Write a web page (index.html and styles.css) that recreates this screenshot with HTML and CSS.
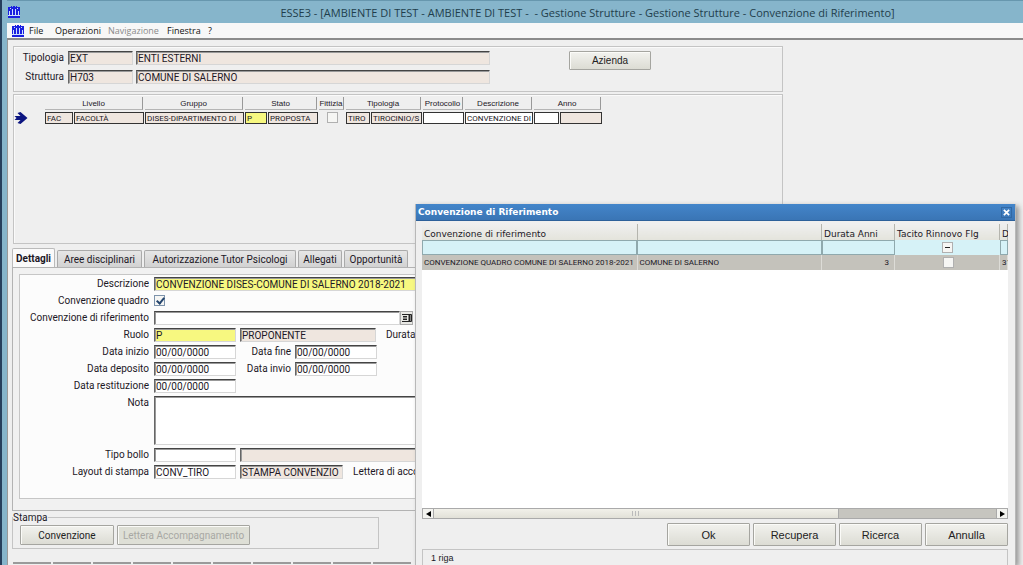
FILE: index.html
```html
<!DOCTYPE html>
<html lang="it">
<head>
<meta charset="utf-8">
<title>ESSE3 - Convenzione di Riferimento</title>
<link rel="stylesheet" href="styles.css">
</head>
<body>
<svg class="defs" aria-hidden="true">
  <symbol id="logo" viewBox="0 0 12 12">
    <path fill="#1a1fe0" d="M0 1h3V0h1v1h1V0h2v1h1V0h1v1h3v11H0z"/>
    <path fill="#cfe0fb" d="M1 5h1v4H1zM4 3h1v6H4zM7 3h1v6H7zM10 5h1v4h-1zM2 2h1v1H2zM9 2h1v1H9zM0 9h12v1H0z"/>
  </symbol>
</svg>
<div class="window">
  <header class="titlebar">
    <svg class="logo"><use href="#logo"/></svg>
    <h1 class="title">ESSE3 - [AMBIENTE DI TEST - AMBIENTE DI TEST -&nbsp; - Gestione Strutture - Gestione Strutture - Convenzione di Riferimento]</h1>
  </header>
  <nav class="menubar">
    <svg class="logo"><use href="#logo"/></svg>
    <button class="menu">File</button>
    <button class="menu menu-wide">Operazioni</button>
    <button class="menu menu-wide" disabled>Navigazione</button>
    <button class="menu menu-mid">Finestra</button>
    <button class="menu">?</button>
  </nav>
  <main class="content">
    <section class="panel head-panel">
      <div class="head-fields">
        <label class="label" for="tipologia">Tipologia</label>
        <input class="field ro" id="tipologia" value="EXT" readonly>
        <input class="field ro" aria-label="Descrizione tipologia" value="ENTI ESTERNI" readonly>
        <label class="label" for="struttura">Struttura</label>
        <input class="field ro" id="struttura" value="H703" readonly>
        <input class="field ro" aria-label="Descrizione struttura" value="COMUNE DI SALERNO" readonly>
      </div>
      <button class="btn btn-azienda">Azienda</button>
    </section>

    <section class="panel list-panel">
      <table class="list">
        <colgroup><col class="c31"><col class="c29"><col class="c71"><col class="c100"><col class="c23"><col class="c51"><col class="c27"><col class="c25"><col class="c52"><col class="c42"><col class="c69"><col class="c26"><col class="c43"></colgroup>
        <thead>
          <tr>
            <td></td>
            <th colspan="2"><span>Livello</span></th>
            <th><span>Gruppo</span></th>
            <th colspan="2"><span>Stato</span></th>
            <th><span>Fittizia</span></th>
            <th colspan="2"><span>Tipologia</span></th>
            <th><span>Protocollo</span></th>
            <th><span>Descrizione</span></th>
            <th colspan="2"><span>Anno</span></th>
          </tr>
        </thead>
        <tbody>
          <tr>
            <td><svg class="arrow" viewBox="0 0 13 12"><path fill="#0b1480" d="M0 4h6L3 1l3-1 7 6-7 6-3-1 3-3H0l2-2z"/></svg></td>
            <td><span class="cell tan">FAC</span></td>
            <td><span class="cell tan">FACOLTÀ</span></td>
            <td><span class="cell tan">DISES-DIPARTIMENTO DI</span></td>
            <td><span class="cell yellow">P</span></td>
            <td><span class="cell tan">PROPOSTA</span></td>
            <td class="center"><input class="check" type="checkbox" aria-label="Fittizia"></td>
            <td><span class="cell tan">TIRO</span></td>
            <td><span class="cell tan">TIROCINIO/S</span></td>
            <td><span class="cell"></span></td>
            <td><span class="cell">CONVENZIONE DI</span></td>
            <td><span class="cell"></span></td>
            <td><span class="cell tan"></span></td>
          </tr>
        </tbody>
      </table>
    </section>

    <div class="tabs" role="tablist">
      <button class="tab active" role="tab">Dettagli</button>
      <button class="tab w85" role="tab">Aree disciplinari</button>
      <button class="tab w152" role="tab">Autorizzazione Tutor Psicologi</button>
      <button class="tab w44" role="tab">Allegati</button>
      <button class="tab w64" role="tab">Opportunità</button>
    </div>
    <section class="tab-panel">
      <form class="form">
        <label class="label" for="descr">Descrizione</label>
        <div class="row"><input class="field req grow" id="descr" value="CONVENZIONE DISES-COMUNE DI SALERNO 2018-2021"></div>
        <label class="label" for="quadro">Convenzione quadro</label>
        <div class="row"><input class="check" type="checkbox" id="quadro" checked></div>
        <label class="label" for="rif">Convenzione di riferimento</label>
        <div class="row tight"><input class="field w246" id="rif"><button type="button" class="lookup" aria-label="Cerca"><svg viewBox="0 0 10 10"><path fill="none" stroke="#222" d="M0 1.500h9.500v7H0M1 3.500h4M1 5h4M1 6.500h4"/><path stroke="#222" stroke-width="2" d="M7.500 2v6"/></svg></button></div>
        <label class="label" for="ruolo">Ruolo</label>
        <div class="row"><input class="field req w82" id="ruolo" value="P"><input class="field ro w136" aria-label="Descrizione ruolo" value="PROPONENTE" readonly><span class="label after">Durata</span></div>
        <label class="label" for="inizio">Data inizio</label>
        <div class="row"><input class="field w82" id="inizio" value="00/00/0000"><label class="label w51" for="fine">Data fine</label><input class="field w82" id="fine" value="00/00/0000"></div>
        <label class="label" for="deposito">Data deposito</label>
        <div class="row"><input class="field w82" id="deposito" value="00/00/0000"><label class="label w51" for="invio">Data invio</label><input class="field w82" id="invio" value="00/00/0000"></div>
        <label class="label" for="restituzione">Data restituzione</label>
        <div class="row"><input class="field w82" id="restituzione" value="00/00/0000"></div>
        <label class="label" for="nota">Nota</label>
        <div class="row"><textarea class="field note grow" id="nota"></textarea></div>
        <label class="label" for="bollo">Tipo bollo</label>
        <div class="row"><input class="field w82" id="bollo"><input class="field ro grow" aria-label="Descrizione bollo" readonly></div>
        <label class="label" for="layout">Layout di stampa</label>
        <div class="row"><input class="field w82" id="layout" value="CONV_TIRO"><input class="field ro w103" aria-label="Descrizione layout" value="STAMPA CONVENZIO" readonly><span class="label after">Lettera di acco</span></div>
      </form>
    </section>

    <fieldset class="print">
      <legend>Stampa</legend>
      <button class="btn w94">Convenzione</button>
      <button class="btn w133" disabled>Lettera Accompagnamento</button>
    </fieldset>
    <div class="strip"><i></i><i></i><i></i><i></i><i></i><i></i><i></i><i></i><i></i><i></i></div>
  </main>
</div>

<div class="dialog" role="dialog" aria-labelledby="dlg-title">
  <header class="dlg-head">
    <h2 id="dlg-title">Convenzione di Riferimento</h2>
    <button class="close" aria-label="Chiudi"><svg viewBox="0 0 8 8"><path stroke="#fff" stroke-width="2" d="M1 1l6 6M7 1L1 7"/></svg></button>
  </header>
  <div class="dlg-body">
    <div class="result">
      <table class="grid">
        <colgroup><col class="c215"><col><col class="c73"><col class="c105"><col class="c8"></colgroup>
        <thead><tr><th>Convenzione di riferimento</th><th></th><th>Durata Anni</th><th>Tacito Rinnovo Flg</th><th>D</th></tr></thead>
        <tbody>
          <tr class="filter">
            <td><input class="filter-box" aria-label="Filtro convenzione"></td>
            <td><input class="filter-box" aria-label="Filtro struttura"></td>
            <td><input class="filter-box" aria-label="Filtro durata"></td>
            <td class="center"><input class="check mixed" type="checkbox" aria-label="Filtro tacito rinnovo"></td>
            <td><input class="filter-box" aria-label="Filtro data"></td>
          </tr>
          <tr class="selected">
            <td>CONVENZIONE QUADRO COMUNE DI SALERNO 2018-2021</td>
            <td>COMUNE DI SALERNO</td>
            <td class="num">3</td>
            <td class="center"><input class="check" type="checkbox" aria-label="Tacito rinnovo"></td>
            <td>31</td>
          </tr>
        </tbody>
      </table>
    </div>
    <div class="scroll">
      <button class="scroll-btn" aria-label="Sinistra"><svg viewBox="0 0 5 6"><path d="M5 0v6L0 3z"/></svg></button>
      <div class="track"><div class="thumb"><i></i><i></i><i></i></div></div>
      <button class="scroll-btn" aria-label="Destra"><svg viewBox="0 0 5 6"><path d="M0 0v6l5-3z"/></svg></button>
    </div>
    <div class="actions">
      <button class="btn">Ok</button>
      <button class="btn">Recupera</button>
      <button class="btn">Ricerca</button>
      <button class="btn">Annulla</button>
    </div>
    <div class="status">1 riga</div>
  </div>
</div>
</body>
</html>
```

FILE: styles.css
```css
* { box-sizing: border-box; }
body {
  margin: 0;
  height: 100vh;
  overflow: hidden;
  position: relative;
  background: #86b5cb;
  color: #1c1826;
  font-family: Roboto, "Liberation Sans", Arial, sans-serif;
  font-size: 10px;
}
button, input, textarea { font: inherit; color: inherit; margin: 0; border-radius: 0; }
.defs { display: none; }

.window {
  height: 100vh;
  display: flex;
  flex-direction: column;
  border-left: 2px solid #263f5c;
  padding-left: 5px;
  overflow: hidden;
}
.titlebar {
  flex: none;
  height: 23px;
  display: flex;
  align-items: center;
  border-top: 1px solid #6797ae;
  padding-left: 1px;
}
.logo { width: 12px; height: 12px; flex: none; }
.title {
  flex: 1;
  margin: 0;
  padding-left: 132px;
  text-align: center;
  font: 11px "Open Sans", "Noto Sans", sans-serif;
  color: #1f3e4c;
  white-space: nowrap;
}
.menubar {
  flex: none;
  height: 17px;
  display: flex;
  align-items: center;
  padding-left: 5px;
  background: #f7f7f7;
  border-bottom: 2px solid #8b8b8b;
  font: 9px "Open Sans", "Noto Sans", sans-serif;
}
.menu { border: 0; background: none; padding: 0 0 0 5px; text-align: left; color: #111; width: 26px; }
.menu-wide { width: 53px; }
.menu-wide[disabled] { width: 59px; color: #8a8a8a; }
.menu-mid { width: 41px; }

.content {
  flex: 1;
  min-height: 0;
  overflow: hidden;
  background: #efefef;
  border-left: 1px solid #999;
  padding: 6px 240px 0 5px;
}
.panel { border: 1px solid #c4c4c4; box-shadow: inset 1px 1px #fafafa; }
.head-panel { height: 46px; display: flex; align-items: flex-start; gap: 79px; padding: 4px 0 0 0; }
.head-fields { display: grid; grid-template-columns: 51px 65px 354px; gap: 5px 3px; }
.head-fields .label { margin-right: 1px; }
.list-panel { height: 150px; margin-top: 2px; padding-top: 2px; }

.label { line-height: 13px; text-align: right; white-space: nowrap; }
.field {
  display: block;
  width: 100%;
  min-width: 0;
  height: 14px;
  padding: 1px 1px 0;
  line-height: 12px;
  background: #fff;
  border: 1px solid #d6d6d6;
  border-top: 1px solid #444;
  border-left: 1px solid #666;
  box-shadow: inset 1px 1px #999;
}
.ro { background: #efe6df; }
.req { background: #f7f880; }

.btn {
  height: 20px;
  padding: 0;
  border: 1px solid #a5a5a0;
  border-radius: 1px;
  background: linear-gradient(#f2f2ee, #dcdcd4);
  box-shadow: inset 1px 1px #fbfbf8;
  color: #222;
  white-space: nowrap;
}
.btn[disabled] { color: #a8a8a4; background: #dedfd6; }
.btn-azienda { width: 82px; height: 19px; font-family: "Liberation Sans", Arial, sans-serif; }

.list { border-collapse: collapse; table-layout: fixed; width: 589px; font: 8px Roboto, Arial, sans-serif; }
.list td, .list th { padding: 0 2px 0 0; vertical-align: top; font-weight: 400; }
.list th span {
  display: block;
  height: 13px;
  line-height: 13px;
  font-family: "Liberation Sans", Arial, sans-serif;
  border-right: 1px solid #999;
  border-bottom: 1px solid #b5b5b5;
  white-space: nowrap;
}
.list tbody td { padding-top: 2px; padding-right: 1px; }
.cell {
  display: block;
  height: 12px;
  padding: 0 1px;
  line-height: 11px;
  border: 1px solid #333;
  background: #fff;
  white-space: nowrap;
}
.tan { background: #efe6df; }
.yellow { background: #f7f880; }
.arrow { display: block; width: 14px; height: 12px; }
.c8 { width: 8px; } .c23 { width: 23px; } .c25 { width: 25px; } .c26 { width: 26px; }
.c27 { width: 27px; } .c29 { width: 29px; } .c31 { width: 31px; } .c42 { width: 42px; }
.c43 { width: 43px; } .c51 { width: 51px; } .c52 { width: 52px; } .c69 { width: 69px; }
.c71 { width: 71px; } .c73 { width: 73px; } .c100 { width: 100px; } .c105 { width: 105px; }
.c215 { width: 215px; }

.check {
  appearance: none;
  display: inline-block;
  vertical-align: top;
  width: 11px;
  height: 11px;
  border: 1px solid #b0b0b0;
  background: #f6f6f4;
  position: relative;
}
.check:checked { border-color: #7d93ab; }
.check:checked::after {
  content: "";
  position: absolute;
  left: 3px;
  top: 0;
  width: 3px;
  height: 6px;
  border: solid #24456e;
  border-width: 0 2px 2px 0;
  transform: rotate(40deg);
}
.center { text-align: center; }

.tabs { display: flex; align-items: flex-end; gap: 2px; height: 19px; margin: 4px 0 0 -1px; }
.tab {
  height: 17px;
  padding: 0;
  border: 1px solid #aaa;
  border-bottom: 0;
  border-radius: 2px 2px 0 0;
  background: linear-gradient(#e6e6e6, #d2d2d2);
  white-space: nowrap;
}
.tab.active { width: 43px; height: 19px; background: #fafafa; font-weight: 700; border-color: #bbb; }
.w44 { width: 44px; } .w64 { width: 64px; } .w85 { width: 85px; } .w152 { width: 152px; }
.tab-panel { margin-left: -1px; padding: 6px; padding-bottom: 11px; border: 1px solid #b3b3b3; background: #f1f1f1; }
.form {
  display: grid;
  grid-template-columns: 129px 1fr;
  gap: 3px 5px;
  padding: 2px 0 19px;
  border: 1px solid #c6c6c6;
  background: #fcfcfc;
}
.row { display: flex; gap: 4px; min-height: 14px; }
.tight { gap: 0; }
.grow { flex: 1; }
.after { margin-left: 6px; }
.row .check { margin-top: 1px; }
.w51 { width: 51px; } .w82 { width: 82px; } .w94 { width: 94px; }
.w103 { width: 103px; } .w133 { width: 133px; } .w136 { width: 136px; } .w246 { width: 246px; }
.note { height: 49px; resize: none; }
.lookup { width: 13px; height: 14px; padding: 1px; border: 1px solid #aaa; background: #e8e8e4; }
.lookup svg { display: block; width: 10px; height: 10px; }

.print {
  width: 367px;
  height: 38px;
  margin: 0 0 0 -1px;
  padding: 1px 7px 0;
  border: 1px solid #c4c4c4;
  display: flex;
  gap: 3px;
}
.print legend { padding: 0 1px 0 0; margin-left: -7px; line-height: 13px; }
.strip { display: flex; gap: 2px; margin-top: 13px; }
.strip i { width: 38px; height: 10px; border-top: 2px solid #9a9a9a; }

.dialog {
  position: absolute;
  left: 415px;
  right: 7px;
  top: 204px;
  bottom: 0;
  display: flex;
  flex-direction: column;
  background: #efefef;
  border: 1px solid #b8b8b8;
  border-top: 0;
  border-bottom: 0;
  box-shadow: 3px 2px 5px #999;
  overflow: hidden;
}
.dlg-head {
  flex: none;
  height: 17px;
  display: flex;
  align-items: center;
  justify-content: space-between;
  padding: 0 3px 0 2px;
  background: linear-gradient(#4385ca, #3a75b5);
  border-bottom: 1px solid #2c609a;
  color: #fff;
}
.dlg-head h2 { margin: 0; font: bold 9px "DejaVu Sans", Verdana, sans-serif; }
.close { width: 11px; height: 11px; padding: 1px; border: 1px solid #3168a4; background: none; }
.close svg { display: block; width: 7px; height: 7px; }
.dlg-body { flex: 1; display: flex; flex-direction: column; padding: 3px 7px 0 6px; min-height: 0; }
.result { flex: 1; background: #fff; overflow: hidden; }
.grid { width: 100%; table-layout: fixed; border-collapse: collapse; }
.grid th, .grid td { height: 15px; padding: 0 0 0 2px; white-space: nowrap; }
.grid th {
  height: 16px;
  padding-top: 3px;
  font: 9px "DejaVu Sans", Verdana, sans-serif;
  text-align: left;
  background: linear-gradient(#efefef, #e4e4dc);
  border-right: 1px solid #b5b5ae;
}
.grid .center, .grid .center .check { vertical-align: middle; }
.grid .center { text-align: center; line-height: 11px; }
.grid .num { text-align: right; padding-right: 5px; }
.filter { background: #d6f2f7; }
.grid .filter td { padding: 0; }
.filter-box { display: block; width: 100%; height: 15px; padding: 0 2px; background: #d6f2f7; border: 1px solid #8fa9ad; }
.mixed::after { content: ""; position: absolute; left: 2px; top: 4px; width: 5px; height: 1px; background: #222; }
.selected { background: #c4c2bb; font-size: 8px; }
.selected td { border-right: 1px solid #dddcd7; }
.scroll { flex: none; display: flex; height: 11px; border: 1px solid #aaa; }
.scroll-btn { width: 11px; height: 9px; padding: 0; border: 0; border-right: 1px solid #aaa; background: #f4f4f0; display: grid; place-items: center; }
.scroll-btn:last-child { border-right: 0; border-left: 1px solid #aaa; }
.scroll-btn svg { width: 5px; height: 6px; }
.track { flex: 1; background: #c6c5bf; }
.thumb { width: 72%; height: 9px; display: flex; justify-content: center; align-items: center; gap: 2px; background: linear-gradient(#f2f1ea, #e2e1d8); border-right: 1px solid #aaa; }
.thumb i { width: 1px; height: 5px; background: #bbb; }
.actions { flex: none; display: flex; justify-content: flex-end; gap: 3px; padding: 4px 0 3px; }
.actions .btn { width: 83px; height: 23px; font: 11px "Liberation Sans", Arial, sans-serif; }
.status { flex: none; height: 16px; padding: 2px 8px 0; border: 1px solid #c4c4c4; border-bottom: 0; font: 9px "Liberation Sans", Arial, sans-serif; line-height: 13px; }
```
